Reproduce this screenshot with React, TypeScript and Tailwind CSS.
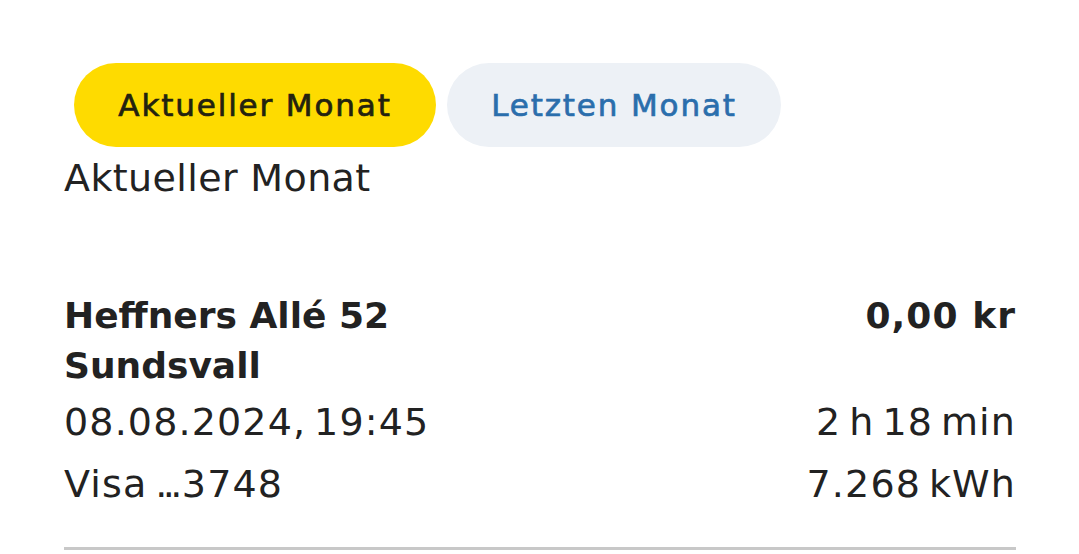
import React from "react";

const body = "font-['DejaVu_Sans',sans-serif]";

export default function App() {
  return (
    <div className={`w-[1079px] h-[554px] overflow-hidden bg-white text-[#222222] ${body}`}>
      <div className="pl-16 pr-[63px] pt-[63px]">
        <div className="flex gap-[11px] pl-[10px]">
          <button className="h-[84px] w-[362px] rounded-full bg-[#fedb00] text-[#23220f] text-[31px] tracking-[0.06em] [-webkit-text-stroke:0.7px_#23220f]">
            Aktueller Monat
          </button>
          <button className="h-[84px] w-[334px] rounded-full bg-[#edf1f6] text-[#2a6eac] text-[31px] tracking-[0.06em] [-webkit-text-stroke:0.7px_#2a6eac]">
            Letzten Monat
          </button>
        </div>
        <div className="mt-[9px] text-[38px] leading-[44px] tracking-[0.01em]">Aktueller Monat</div>

        <div className="mt-[91px]">
          <div className="flex justify-between items-start">
            <div className="text-[36px] leading-[50px] font-bold">
              <div>Heffners Allé 52</div>
              <div>Sundsvall</div>
            </div>
            <div className="text-[36px] leading-[50px] font-bold tracking-[0.03em]">0,00 kr</div>
          </div>
          <div className="flex justify-between text-[38px] leading-[62px] tracking-[0.03em] [word-spacing:-0.14em]">
            <div>08.08.2024, 19:45</div>
            <div>2 h 18 min</div>
          </div>
          <div className="flex justify-between text-[38px] leading-[62px] tracking-[0.03em] [word-spacing:-0.14em]">
            <div>
              Visa <span className="tracking-[-0.12em]">...</span>
              <span className="ml-[4px]">3748</span>
            </div>
            <div>7.268 kWh</div>
          </div>
          <div className="mt-[32px] h-[3px] bg-[#c8c8c8]" />
        </div>
      </div>
    </div>
  );
}
